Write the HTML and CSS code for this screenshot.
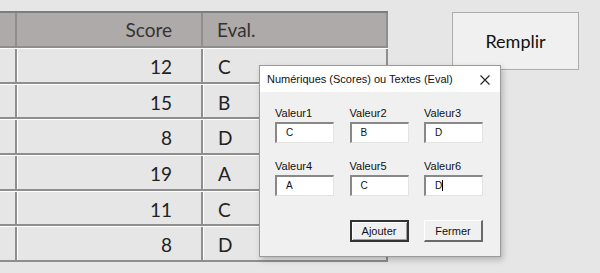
FILE: index.html
```html
<!DOCTYPE html>
<html lang="fr">
<head>
  <meta charset="UTF-8">
  <title>Remplir</title>
  <link rel="stylesheet" href="styles.css">
</head>
<body>

  <div class="sheet">
    <div class="grid">
      <div class="row head">
        <div class="cell"></div>
        <div class="cell num">Score</div>
        <div class="cell txt">Eval.</div>
      </div>
      <div class="row"><div class="cell"></div><div class="cell num">12</div><div class="cell txt">C</div></div>
      <div class="row"><div class="cell"></div><div class="cell num">15</div><div class="cell txt">B</div></div>
      <div class="row"><div class="cell"></div><div class="cell num">8</div><div class="cell txt">D</div></div>
      <div class="row"><div class="cell"></div><div class="cell num">19</div><div class="cell txt">A</div></div>
      <div class="row"><div class="cell"></div><div class="cell num">11</div><div class="cell txt">C</div></div>
      <div class="row"><div class="cell"></div><div class="cell num">8</div><div class="cell txt">D</div></div>
    </div>

    <button class="fill-btn">Remplir</button>
  </div>

  <div class="dialog">
    <div class="dialog-title">
      <span>Numériques (Scores) ou Textes (Eval)</span>
      <svg class="close" width="10" height="10" viewBox="0 0 10 10">
        <path d="M0.5 0.5 L9.5 9.5 M9.5 0.5 L0.5 9.5" stroke="#222" stroke-width="1.1" fill="none"/>
      </svg>
    </div>
    <div class="dialog-body">
      <div class="fields">
        <div class="field"><label>Valeur1</label><div class="box">C</div></div>
        <div class="field"><label>Valeur2</label><div class="box">B</div></div>
        <div class="field"><label>Valeur3</label><div class="box">D</div></div>
        <div class="field"><label>Valeur4</label><div class="box">A</div></div>
        <div class="field"><label>Valeur5</label><div class="box">C</div></div>
        <div class="field"><label>Valeur6</label><div class="box">D<span class="caret"></span></div></div>
        <div class="field"></div>
        <button class="win-btn default">A<u>j</u>outer</button>
        <button class="win-btn">Fermer</button>
      </div>
    </div>
  </div>

</body>
</html>
```

FILE: styles.css
```css
body {
  margin: 0;
  background: #e6e6e6;
  font-family: Lato, "Liberation Sans", sans-serif;
  height: 273px;
  overflow: hidden;
}

.sheet {
  display: flex;
  align-items: flex-start;
  padding-top: 11px;
}

.grid {
  width: 388px;
  border-top: 2px solid #7e7e7e;
}

.row {
  display: grid;
  grid-template-columns: 17px 186px 185px;
  height: 35.7px;
  box-sizing: border-box;
  border-top: 1px solid #fff;
  border-bottom: 2px solid #8e8e8e;
  background: #e7e6e6;
}

.row.head {
  height: 35px;
  border-top: none;
  background: #aeaaaa;
}

.cell {
  display: flex;
  align-items: center;
  box-sizing: border-box;
  border-right: 2px solid #8e8e8e;
  border-left: 1px solid #fff;
  font-size: 19px;
  color: #222;
  padding-top: 2px;
}

.head .cell {
  color: #363333;
  border-left: none;
  padding-top: 0;
}

.cell:first-child {
  border-left: none;
}

.cell.num {
  justify-content: flex-end;
  padding-right: 29px;
}

.cell.txt {
  padding-left: 14px;
}

.fill-btn {
  margin-left: 64px;
  margin-top: 1px;
  width: 127px;
  height: 58px;
  background: #f0f0f0;
  border: 1px solid #adadad;
  font-family: Lato, "Liberation Sans", sans-serif;
  font-size: 18px;
  color: #111;
  padding: 0;
}

/* dialog floats above the sheet */
.dialog {
  position: absolute;
  left: 259px;
  top: 65px;
  width: 242px;
  height: 192px;
  box-sizing: border-box;
  border: 1px solid #9a9a9a;
  background: #f0f0f0;
  box-shadow: 2px 3px 6px rgba(0, 0, 0, 0.22);
  font-family: "Liberation Sans", sans-serif;
}

.dialog-title {
  height: 26px;
  background: #fff;
  display: flex;
  align-items: center;
  justify-content: space-between;
  padding: 0 10px 0 7px;
  font-size: 11px;
  color: #111;
}

.close {
  margin-top: 1px;
}

.dialog-body {
  padding: 15px 0 0 15px;
}

.fields {
  display: grid;
  grid-template-columns: repeat(3, 59px);
  column-gap: 15.5px;
  row-gap: 17px;
}

.field label {
  display: block;
  font-size: 11px;
  line-height: 13px;
  margin-bottom: 2px;
  color: #111;
}

.box {
  height: 21px;
  box-sizing: border-box;
  background: #fff;
  border-style: solid;
  border-width: 2px 1px 1px 2px;
  border-color: #888 #e3e3e3 #e3e3e3 #888;
  font-size: 10px;
  line-height: 17px;
  padding-left: 9px;
  color: #111;
}

.caret {
  display: inline-block;
  width: 1px;
  height: 11px;
  background: #000;
  vertical-align: -2px;
}

.win-btn {
  margin-top: 7px;
  height: 22px;
  background: #f0f0f0;
  border-style: solid;
  border-width: 1px 2px 2px 1px;
  border-color: #fff #6a6a6a #6a6a6a #fff;
  font-family: "Liberation Sans", sans-serif;
  font-size: 11px;
  color: #111;
  padding: 0;
}

.win-btn.default {
  border: 2px solid #333;
  box-shadow: inset 1px 1px 0 #fff, inset -1px -1px 0 #a0a0a0;
}
```
